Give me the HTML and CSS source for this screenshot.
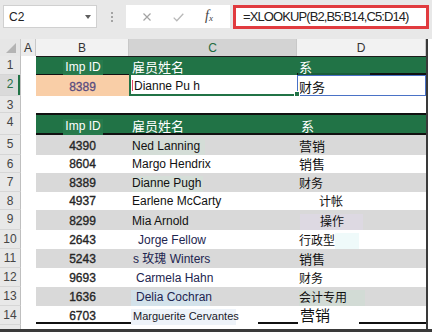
FILE: index.html
```html
<!DOCTYPE html>
<html>
<head>
<meta charset="utf-8">
<link rel="stylesheet" href="styles.css">
</head>
<body>
<div class="app">
  <div class="fbar">
    <div class="namebox"><span>C2</span><span class="nb-arrow"></span></div>
    <div class="grip"><i></i><i></i><i></i></div>
    <div class="fxbox">
      <svg class="ico-x" width="8" height="8" viewBox="0 0 8 8"><path d="M0.5 0.5L7.5 7.5M7.5 0.5L0.5 7.5" stroke="#a3a3a3" stroke-width="1.2" fill="none"/></svg>
      <svg class="ico-ok" width="11" height="9" viewBox="0 0 11 9"><path d="M0.7 4.6L3.8 7.8L10.3 0.8" stroke="#b8b8b8" stroke-width="1.3" fill="none"/></svg>
      <span class="fx"><i>f</i><sub>x</sub></span>
    </div>
    <div class="formula">=XLOOKUP(B2,B5:B14,C5:D14)</div>
  </div>
  <div class="sheet">
    <div class="row hdr">
      <div class="corner"><span class="tri"></span></div>
      <div class="ch ch-a">A</div>
      <div class="ch ch-lt">B</div>
      <div class="ch ch-sel">C</div>
      <div class="ch ch-lt">D</div>
    </div>

    <div class="row h19 r1">
      <div class="rh">1</div><div class="ca"></div>
      <div class="cb g gb1"><span class="t pid">Imp ID</span></div>
      <div class="cc g gc1"><span class="t tw zh o3">雇员姓名</span></div>
      <div class="cd g gd1"><span class="t tw zh pd1">系</span></div>
    </div>

    <div class="row h21">
      <div class="rh rh-sel">2</div><div class="ca"></div>
      <div class="cb peach"><span class="t num purple">8389</span></div>
      <div class="cc csel"><span class="caret"></span><span class="t">Dianne Pu h</span><span class="handle"></span></div>
      <div class="cd dsel"><span class="t zh o1">财务</span></div>
    </div>

    <div class="row h17">
      <div class="rh">3</div><div class="ca"></div><div class="cb"></div><div class="cc"></div><div class="cd"></div>
    </div>

    <div class="row h22 r4">
      <div class="rh">4</div><div class="ca"></div>
      <div class="cb g gb4"><span class="t pid">Imp ID</span></div>
      <div class="cc g gc4"><span class="t tw zh o3">雇员姓名</span></div>
      <div class="cd g gc4"><span class="t tw zh o4">系</span></div>
    </div>

    <div class="row h20 band">
      <div class="rh">5</div><div class="ca"></div>
      <div class="cb"><span class="t num">4390</span></div>
      <div class="cc"><span class="t o3 p-ned">Ned Lanning</span></div>
      <div class="cd"><span class="t zh o2">营销</span></div>
    </div>

    <div class="row h18">
      <div class="rh">6</div><div class="ca"></div>
      <div class="cb"><span class="t num">8604</span></div>
      <div class="cc"><span class="t o3">Margo Hendrix</span></div>
      <div class="cd"><span class="t zh o2">销售</span></div>
    </div>

    <div class="row h19 band">
      <div class="rh">7</div><div class="ca"></div>
      <div class="cb"><span class="t num">8389</span></div>
      <div class="cc"><span class="t o3 p-dia">Dianne Pugh</span></div>
      <div class="cd"><span class="t zh z12 o2">财务</span></div>
    </div>

    <div class="row h18">
      <div class="rh">8</div><div class="ca"></div>
      <div class="cb"><span class="t num">4937</span></div>
      <div class="cc"><span class="t o3">Earlene McCarty</span></div>
      <div class="cd"><span class="t zh z12 o22">计帐</span></div>
    </div>

    <div class="row h20 band">
      <div class="rh">9</div><div class="ca"></div>
      <div class="cb"><span class="t num">8299</span></div>
      <div class="cc"><span class="t o3">Mia Arnold</span></div>
      <div class="cd"><span class="t zh z12 p-op">操作</span></div>
    </div>

    <div class="row h19">
      <div class="rh">10</div><div class="ca"></div>
      <div class="cb"><span class="t num">2643</span></div>
      <div class="cc"><span class="t o9 navy">Jorge Fellow</span></div>
      <div class="cd"><span class="t zh z12 p-xz">行政型</span></div>
    </div>

    <div class="row h19 band">
      <div class="rh">11</div><div class="ca"></div>
      <div class="cb"><span class="t num">5243</span></div>
      <div class="cc"><span class="t o4 navy">s 玫瑰 Winters</span></div>
      <div class="cd"><span class="t zh o2">销售</span></div>
    </div>

    <div class="row h19">
      <div class="rh">12</div><div class="ca"></div>
      <div class="cb"><span class="t num">9693</span></div>
      <div class="cc"><span class="t o7 navy">Carmela Hahn</span></div>
      <div class="cd"><span class="t zh z12 o2">财务</span></div>
    </div>

    <div class="row h19 band">
      <div class="rh">13</div><div class="ca"></div>
      <div class="cb"><span class="t num">1636</span></div>
      <div class="cc"><span class="t navy p-del">Delia Cochran</span></div>
      <div class="cd"><span class="t zh z12 p-kj">会计专用</span></div>
    </div>

    <div class="row h19 r14">
      <div class="rh">14</div><div class="ca"></div>
      <div class="cb"><span class="t num">6703</span></div>
      <div class="cc"><span class="t p-mar">Marguerite Cervantes</span></div>
      <div class="cd"><span class="t zh z15 p-yx">营销</span></div>
    </div>

    <div class="row h19">
      <div class="rh">15</div><div class="ca"></div><div class="cb"></div><div class="cc"></div><div class="cd"></div>
    </div>
  </div>
</div>
</body>
</html>
```

FILE: styles.css
```css
* { box-sizing: border-box; margin: 0; padding: 0; }
body {
  margin: 0;
  background: #fff;
  font-family: "Liberation Sans", "Noto Sans CJK SC", sans-serif;
  width: 432px;
  height: 332px;
  overflow: hidden;
}
.app {
  width: 432px;
  height: 332px;
  border-bottom: 3px solid #3a3a3a;
  overflow: hidden;
}

/* formula bar */
.fbar {
  height: 39px;
  background: #e8e8e8;
  display: flex;
  align-items: flex-start;
  padding: 5px 0 0 3px;
}
.namebox {
  width: 94px;
  height: 23px;
  background: #fff;
  border: 1px solid #d0d0d0;
  display: flex;
  align-items: center;
  justify-content: space-between;
  padding: 0 5px 0 5px;
  font-size: 12px;
  color: #222;
}
.nb-arrow {
  width: 0;
  height: 0;
  border-left: 3.5px solid transparent;
  border-right: 3.5px solid transparent;
  border-top: 4px solid #5e5e5e;
}
.grip {
  width: 29px;
  height: 23px;
  display: flex;
  flex-direction: column;
  align-items: center;
  justify-content: center;
  gap: 2px;
  padding-left: 1px;
}
.grip i {
  display: block;
  width: 2px;
  height: 2px;
  background: #a4a4a4;
}
.fxbox {
  width: 104px;
  height: 23px;
  background: #fff;
  display: flex;
  align-items: center;
  padding-left: 17px;
}
.ico-x { margin-top: 1px; }
.ico-ok { margin-left: 22px; margin-top: 1px; }
.fx {
  margin-left: 21px;
  font-family: "Liberation Serif", serif;
  font-size: 14px;
  color: #444;
  line-height: 14px;
}
.fx sub { font-size: 9px; font-style: italic; vertical-align: -1px; }
.formula {
  margin-left: 3px;
  width: 196px;
  height: 24px;
  border: 3px solid #e13b3f;
  background: #fff;
  font-size: 13px;
  letter-spacing: -0.9px;
  color: #222;
  padding-left: 7px;
  line-height: 18px;
  white-space: nowrap;
}

/* sheet */
.sheet {
  width: 428px;
  height: 290px;
  border-right: 2px solid #3a3a3a;
  overflow: hidden;
}
.row {
  display: grid;
  grid-template-columns: 21px 15px 93px 168px 129px;
  height: 19px;
}
.row > div { position: relative; display: flex; align-items: flex-end; }
.hdr { height: 17px; }
.h17 { height: 17px; }
.h18 { height: 18px; }
.h19 { height: 19px; }
.h20 { height: 20px; }
.h21 { height: 21px; }
.h22 { height: 22px; }

.corner {
  background: #e6e6e6;
  border-right: 1px solid #c8c8c8;
  justify-content: flex-end;
  padding: 0 4px 3px 0;
}
.tri {
  width: 0;
  height: 0;
  border-left: 10px solid transparent;
  border-bottom: 10px solid #b4b4b4;
}
.row > .ch {
  align-items: center;
  justify-content: center;
  font-size: 12px;
  color: #333;
  border-right: 1px solid #c8c8c8;
  background: #ececec;
}
.row > .ch-lt { background: #f2f2f2; }
.row > .ch-sel { background: #d3d3d3; color: #1e6b40; }

.row > .rh {
  background: #e8e8e8;
  border-right: 1px solid #bfbfbf;
  border-bottom: 1px solid #d6d6d6;
  font-size: 12px;
  color: #454545;
  align-items: flex-start;
  justify-content: center;
  padding-top: 3px;
  line-height: 13px;
}
.row > .rh-sel {
  background: #dadada;
  color: #2a6f48;
  box-shadow: inset -2px 0 0 #217346;
}
.ca { background: #fff; }
.cb { justify-content: center; }

.t {
  display: block;
  font-size: 12px;
  line-height: 14px;
  padding-bottom: 2px;
  color: #111;
  white-space: nowrap;
}
.r1 .t { padding-bottom: 1px; }
.zh { font-family: "Noto Sans CJK SC", sans-serif; font-size: 13px; }
.z12 { font-size: 12px; }
.z15 { font-size: 15px; line-height: 17px; padding-bottom: 2px; }
.num { color: #262626; -webkit-text-stroke: 0.35px #262626; }
.purple { color: #594c7f; -webkit-text-stroke: 0.3px #594c7f; }
.navy { color: #1d2550; }
.tw { color: #fff; }

.o1 { margin-left: 1px; }
.o2 { margin-left: 2px; }
.o3 { margin-left: 3px; }
.o4 { margin-left: 4px; }
.o7 { margin-left: 7px; }
.o9 { margin-left: 9px; }
.o22 { margin-left: 22px; }

/* green header bands */
.g { background: #217346; }
.gb1 { box-shadow: inset 0 1px 0 #1c1c1c, inset 0 -1px 0 #111; }
.gc1 { box-shadow: inset 0 1px 0 #1c1c1c; }
.gd1 { box-shadow: inset 0 1px 0 #1c1c1c, inset 0 -2px 0 #111; }
.gb4, .gc4 { box-shadow: inset 0 2px 0 #111, inset 0 -2px 0 #111; }
.pid {
  width: 40px;
  text-align: center;
  color: #fff;
  background: #277a4c;
  margin-left: 1px;
}
.pd1 {
  width: 72px;
  margin-left: 1px;
  padding-left: 1px;
  background: linear-gradient(to top, #1b5d39 2px, #217346 2px);
}

/* row 2 */
.peach { background: #f9cea7; }
.csel {
  background: #fff;
  border-left: 2px solid #217346;
  border-bottom: 2px solid #217346;
  z-index: 2;
}
.csel .t { padding-bottom: 1px; }
.caret {
  display: block;
  width: 1px;
  height: 11px;
  background: #e0486a;
  margin: 0 1px 3px 1px;
}
.handle {
  position: absolute;
  right: -3px;
  bottom: -3px;
  width: 6px;
  height: 6px;
  background: #217346;
  border: 1px solid #fff;
}
.dsel {
  border: 1px solid #4a72c6;
  background: #fff;
}
.dsel .t { padding-bottom: 1px; }

/* banding */
.band .cb, .band .cc, .band .cd { background: #d9d9d9; }

/* text patches */
.p-ned { width: 73px; background: #d4ddd7; }
.p-dia { width: 71px; background: #d5ded8; }
.p-op { margin-left: 3px; width: 63px; padding-left: 20px; background: #ddd9e2; }
.p-xz { margin-left: 2px; width: 60px; background: linear-gradient(to right, transparent 36px, #effafa 36px); }
.p-del { margin-left: 2px; width: 79px; padding-left: 5px; background: #d3e2ea; }
.p-kj { margin-left: 2px; width: 66px; background: #d2dbd5; }

/* row 14 bottom rule */
.r14 .cb, .r14 .cc, .r14 .cd {
  background: linear-gradient(#111, #111) left bottom 1px / 100% 2px no-repeat;
}
.p-mar {
  margin-left: 2px;
  width: 127px;
  padding-left: 2px;
  font-size: 11px;
  color: #1a1a2a;
  background: linear-gradient(to right, #eef3f9 105px, #fff 105px);
}
.p-yx {
  margin-left: 1px;
  width: 61px;
  padding-left: 2px;
  background: #fff;
}
```
